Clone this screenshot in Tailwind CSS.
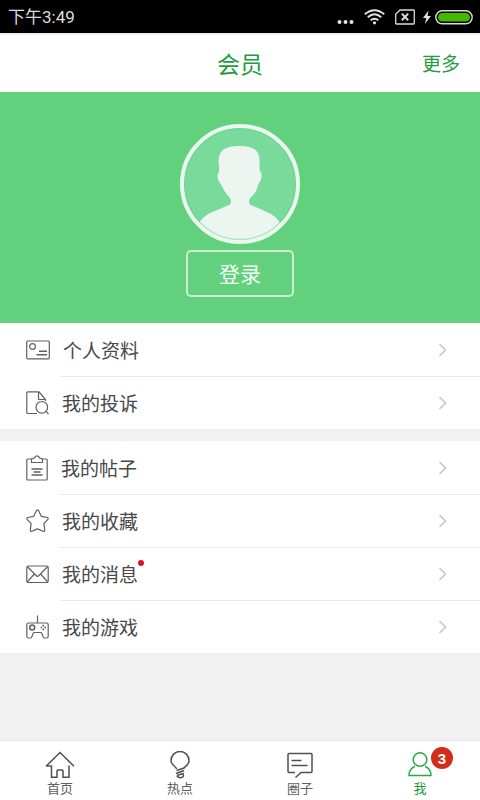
<!DOCTYPE html>
<html lang="zh-CN">
<head>
<meta charset="utf-8">
<meta name="viewport" content="width=device-width, initial-scale=1">
<title>会员</title>
<script src="https://cdn.jsdelivr.net/npm/@tailwindcss/browser@4"></script>
</head>
<body class="flex min-h-screen flex-col bg-[#f1f1f1] font-['Noto_Sans_CJK_SC',sans-serif] text-[#484848]">

<div class="flex h-[33px] items-center justify-between bg-black pr-[7px] pl-2 text-[#dcdcdc]">
  <span class="font-[Roboto,'Noto_Sans_CJK_SC',sans-serif] text-[17px] leading-6">下午3:49</span>
  <div class="flex items-center" aria-hidden="true">
    <svg class="mr-2.5" width="17" height="20" viewBox="0 0 17 20" fill="#e4e4e4"><circle cx="2.500" cy="15" r="2"/><circle cx="8.500" cy="15" r="2"/><circle cx="14.500" cy="15" r="2"/></svg>
    <svg class="mr-2.5" width="21" height="20" viewBox="0 0 21 20" fill="none" stroke="#e4e4e4" stroke-width="1.900"><path d="M.8 7.200Q10.500-.8 20.200 7.200M3.800 10.300Q10.500 4.400 17.200 10.300M6.700 13.300Q10.500 10 14.300 13.300"/><circle cx="10.500" cy="15.800" r="1.600" fill="#e4e4e4" stroke="none"/></svg>
    <svg class="mr-2" width="20" height="20" viewBox="0 0 20 20" fill="none" stroke="#dcdcdc" stroke-width="1.300"><path d="M5 3H18.500Q19.300 3 19.300 3.800V16.200Q19.300 17 18.500 17H1.500Q.7 17 .7 16.200V7.300Z"/><path d="M6.800 6.600L13.200 13.200M13.200 6.600L6.800 13.200" stroke-width="2"/></svg>
    <svg class="mr-1" width="8" height="20" viewBox="0 0 8 20" fill="#e4e4e4"><path d="M5.500 3.500L0 11H3.300L1.800 17L8 9H4.500Z"/></svg>
    <svg width="38" height="20" viewBox="0 0 38 20"><rect x=".8" y="3.800" width="36.400" height="13" rx="6.500" fill="none" stroke="#d5dfd0" stroke-width="1.400"/><rect x="3" y="6" width="32" height="8.600" rx="4.300" fill="#47b800"/></svg>
  </div>
</div>

<header class="grid h-[59px] grid-cols-[1fr_auto_1fr] items-center border-t-2 border-[#f1eff1] bg-white px-5 pb-0.5 text-[#229c3e]">
  <h1 class="col-start-2 text-[23px] leading-8">会员</h1>
  <a href="#more" class="justify-self-end text-[19px] leading-7">更多</a>
</header>

<main class="flex-1">
  <section class="flex h-[231px] flex-col items-center bg-[#63d07e] pt-8">
    <svg width="120" height="120" viewBox="0 0 120 120" role="img" aria-label="头像">
      <defs><clipPath id="disc"><circle cx="60" cy="60" r="56"/></clipPath></defs>
      <circle cx="60" cy="60" r="58" fill="#78db9b"/>
      <path clip-path="url(#disc)" fill="#edf5f1" d="M60 22C66 22 71 23 74 25C79 28 80 33 79.500 42C79.500 45 79.500 47 80 47C82.500 49 82 56 79 59C78 60 78 63 76 67C74 71 69 74 69 77Q69 80 71 81L89 89C97 93 99 97 101 101V120H18V101C20 97 23 93 30 89L49 81Q51 80 51 77C51 74 46 70 44 66C42 63 41 60 40 59C37 56 37 49 39 48Q39 45 39 42C38 36 39 31 41 28C45 23 52 22 60 22Z"/>
      <circle cx="60" cy="60" r="55.500" fill="none" stroke="#68c98b" stroke-opacity=".45" stroke-width="1.500"/>
      <circle cx="60" cy="60" r="58" fill="none" stroke="#e9faed" stroke-width="4"/>
    </svg>
    <button type="button" class="mt-1.5 h-[47px] w-[108px] rounded-[5px] border-2 border-[#c8efd1] pb-0.5 text-[21px] leading-8 text-[#f4fff6]">登录</button>
  </section>

  <nav aria-label="会员菜单" class="text-[19px] leading-7">
    <ul class="bg-white">
      <li class="relative">
        <a href="#profile" class="flex h-[53px] items-center gap-[13px] pr-[33px] pl-[26px]">
          <svg width="24" height="24" viewBox="0 0 24 24" fill="none" stroke="#606060" stroke-width="1.200"><rect x=".7" y="3" width="22.600" height="17.800" rx="1"/><circle cx="6.500" cy="8.500" r="2.900"/><path d="M13 13.300H21M10.500 16.800H21" stroke-width="1.500"/></svg>
          <span>个人资料</span>
          <svg class="ml-auto" width="9" height="14" viewBox="0 0 9 14" fill="none" stroke="#c8c8c8" stroke-width="1.700"><path d="M1.500 1L7.500 7L1.500 13"/></svg>
        </a>
      </li>
      <li class="relative before:absolute before:top-0 before:right-0 before:left-[60px] before:h-px before:bg-[#e9e9e9]">
        <a href="#complaints" class="flex h-[53px] items-center gap-[13px] pr-[33px] pl-[26px]">
          <svg width="23" height="24" viewBox="0 0 23 24" fill="none" stroke="#606060" stroke-width="1.200"><path d="M11 22.500H1.700Q.8 22.500 .8 21.600V1.800Q.8 .9 1.700 .9H13L19.500 8.500V10M12.500 1V8.500H19.500"/><circle cx="15.800" cy="16.300" r="5.800"/><path d="M19.900 20.400L22.500 23"/></svg>
          <span>我的投诉</span>
          <svg class="ml-auto" width="9" height="14" viewBox="0 0 9 14" fill="none" stroke="#c8c8c8" stroke-width="1.700"><path d="M1.500 1L7.500 7L1.500 13"/></svg>
        </a>
      </li>
    </ul>
    <ul class="mt-3 bg-white">
      <li class="relative">
        <a href="#posts" class="flex h-[53px] items-center gap-[13px] pr-[33px] pl-[26px]">
          <svg width="22" height="26" viewBox="0 0 22 26" fill="none" stroke="#606060" stroke-width="1.200"><path d="M5.500 4H1.700Q.8 4 .8 4.900V24.100Q.8 25 1.700 25H20.300Q21.200 25 21.200 24.100V4.900Q21.200 4 20.300 4H16.500"/><path d="M5.500 7.500V4.500Q5.500 3.500 7 3.300L8.500 3Q9 .8 11 .8T13.500 3L15 3.300Q16.500 3.500 16.500 4.500V7.500Z"/><path d="M5.500 14H16.500M7.500 17H14.500M5.500 20H16.500" stroke-width="1.400"/></svg>
          <span>我的帖子</span>
          <svg class="ml-auto" width="9" height="14" viewBox="0 0 9 14" fill="none" stroke="#c8c8c8" stroke-width="1.700"><path d="M1.500 1L7.500 7L1.500 13"/></svg>
        </a>
      </li>
      <li class="relative before:absolute before:top-0 before:right-0 before:left-[60px] before:h-px before:bg-[#e9e9e9]">
        <a href="#favorites" class="flex h-[53px] items-center gap-[13px] pr-[33px] pl-[26px]">
          <svg width="23" height="24" viewBox="0 0 23 24" fill="none" stroke="#606060" stroke-width="1.200" stroke-linejoin="round"><path d="M10.400 1.700Q11.500 .2 12.600 1.700L15.300 7.300L21.300 8.500Q22.900 9 21.800 10.300L17.900 14.700L18.700 21Q18.700 22.900 17 22.200L11.500 19.900L6 22.200Q4.300 22.900 4.300 21L5.100 14.700L1.200 10.300Q.1 9 1.700 8.500L7.700 7.300Z"/></svg>
          <span>我的收藏</span>
          <svg class="ml-auto" width="9" height="14" viewBox="0 0 9 14" fill="none" stroke="#c8c8c8" stroke-width="1.700"><path d="M1.500 1L7.500 7L1.500 13"/></svg>
        </a>
      </li>
      <li class="relative before:absolute before:top-0 before:right-0 before:left-[60px] before:h-px before:bg-[#e9e9e9]">
        <a href="#messages" class="flex h-[53px] items-center gap-[13px] pr-[33px] pl-[26px]">
          <svg width="23" height="24" viewBox="0 0 23 24" fill="none" stroke="#606060" stroke-width="1.200"><rect x=".8" y="4" width="21.400" height="16.500" rx="1.500"/><path d="M1.300 4.500L10 13.500Q11.500 15 13 13.500L21.700 4.500M1.300 20L8.300 12M21.700 20L14.700 12"/></svg>
          <span class="relative">我的消息<i class="absolute top-0 -right-1.5 size-1.5 rounded-full bg-[#df1521]"></i></span>
          <svg class="ml-auto" width="9" height="14" viewBox="0 0 9 14" fill="none" stroke="#c8c8c8" stroke-width="1.700"><path d="M1.500 1L7.500 7L1.500 13"/></svg>
        </a>
      </li>
      <li class="relative before:absolute before:top-0 before:right-0 before:left-[60px] before:h-px before:bg-[#e9e9e9]">
        <a href="#games" class="flex h-[53px] items-center gap-[13px] pr-[33px] pl-[26px]">
          <svg width="23" height="24" viewBox="0 0 23 24" fill="none" stroke="#606060" stroke-width="1.200"><path d="M11.500 .5V8M2.300 8H20.700Q22.200 8 22.200 9.500V21.500Q22.200 23 20.700 23H18.500Q17.300 23 17 21.500L16 18.500Q15.700 17.500 14.500 17.500H8.500Q7.300 17.500 7 18.500L6 21.500Q5.700 23 4.500 23H2.300Q.8 23 .8 21.500V9.500Q.8 8 2.300 8Z"/><circle cx="6.200" cy="12.500" r="2.500" stroke-width="1.500"/><path d="M17.300 9.800V11.400M17.300 13.600V15.200M14.600 12.500H16.200M18.400 12.500H20" stroke-width="1.700"/></svg>
          <span>我的游戏</span>
          <svg class="ml-auto" width="9" height="14" viewBox="0 0 9 14" fill="none" stroke="#c8c8c8" stroke-width="1.700"><path d="M1.500 1L7.500 7L1.500 13"/></svg>
        </a>
      </li>
    </ul>
  </nav>
</main>

<nav aria-label="主导航" class="grid h-[60px] grid-cols-4 border-t border-[#e6e6e6] bg-white text-[13px] leading-4 text-[#606060]">
  <a href="#home" class="flex flex-col items-center pt-2.5">
    <svg width="30" height="28" viewBox="0 0 30 28" fill="none" stroke="#505050" stroke-width="1.500"><path d="M1 15.300L15 1.500L29 15.300M1 15H6.500V26.300H12V20Q12 19 13 19H17Q18 19 18 20V26.300H24V14.500"/></svg>
    <span class="mt-px">首页</span>
  </a>
  <a href="#hot" class="flex flex-col items-center pt-2.5">
    <svg width="20" height="28" viewBox="0 0 20 28" fill="none" stroke="#505050" stroke-width="1.500"><path d="M6.500 18C6.500 15.500 1 14.500 1 9.500A9 9 0 0 1 19 9.500C19 14 15 15.500 14 17L6.500 19.500M14 19.500L6 22.500M7 24.500L13 22.500Q14.500 26.700 10.500 26.700Q7.500 26.700 7 24.500"/></svg>
    <span class="mt-px">热点</span>
  </a>
  <a href="#circle" class="flex flex-col items-center pt-2.5">
    <svg width="26" height="28" viewBox="0 0 26 28" fill="none" stroke="#505050" stroke-width="1.500"><path d="M8 21.500H2Q1 21.500 1 20.500V3.500Q1 2.500 2 2.500H24Q25 2.500 25 3.500V20.500Q25 21.500 24 21.500H14L8.500 26.500M4.500 9.500H14.500M4.500 14.500H20.500"/></svg>
    <span class="mt-px">圈子</span>
  </a>
  <a href="#me" class="flex flex-col items-center pt-2.5 text-[#229c3e]">
    <span class="relative">
      <svg width="24" height="28" viewBox="0 0 24 28" fill="none" stroke="#2ba84a" stroke-width="1.500"><circle cx="12" cy="8.500" r="6.800"/><path d="M7 15.300C3 17 1 20 1 24.500H23C23 20 21 17 17 15.300"/></svg>
      <b class="absolute -top-1 -right-[21px] flex size-[22px] items-center justify-center rounded-full bg-[#d22d1b] font-['Liberation_Sans',sans-serif] text-[15px] leading-none text-white">3</b>
    </span>
    <span class="mt-px">我</span>
  </a>
</nav>
</body>
</html>
